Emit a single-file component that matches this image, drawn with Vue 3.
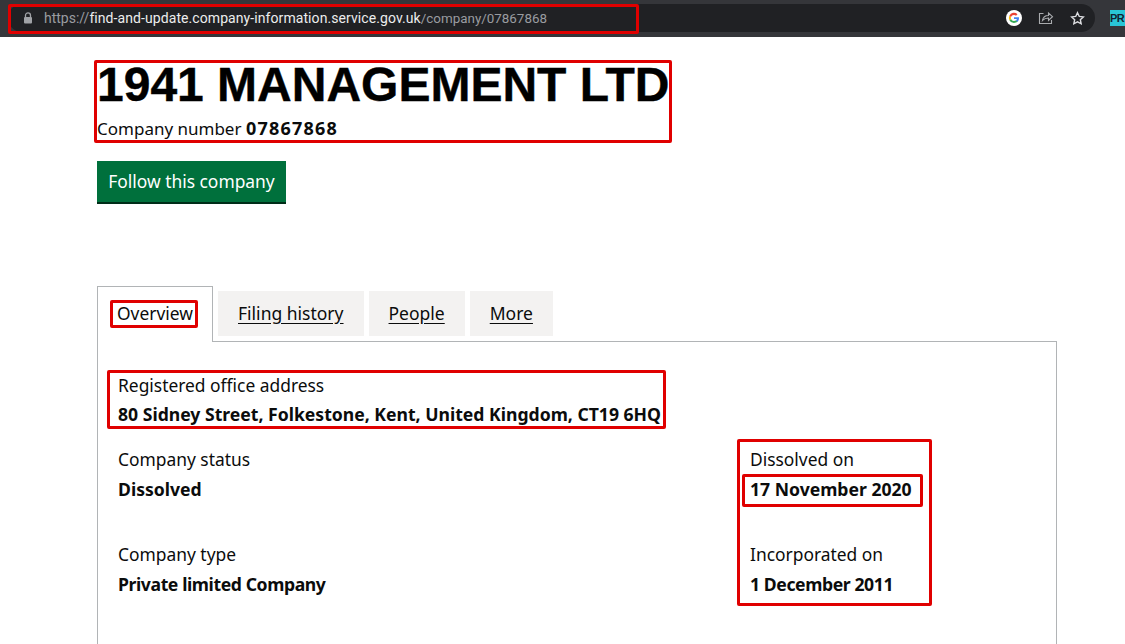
<script setup>
const tabs = ['Filing history', 'People', 'More']
const boxes = [
  { name: 'url', style: 'left:8px;top:4px;width:631px;height:30px' },
  { name: 'title', style: 'left:94px;top:60px;width:578px;height:83px' },
  { name: 'tab', style: 'left:110px;top:300px;width:88px;height:28px' },
  { name: 'addr', style: 'left:107px;top:370px;width:559px;height:59px' },
  { name: 'side', style: 'left:737px;top:439px;width:195px;height:167px' },
  { name: 'date', style: 'left:742px;top:474px;width:181px;height:33px' }
]
</script>

<template>
  <div class="page">
    <header class="chrome">
      <div class="omnibox">
        <svg class="lock" width="10" height="12" viewBox="0 0 10 12"><path d="M2.500 5V3.400a2.500 2.500 0 0 1 5 0V5" fill="none" stroke="#a0a2a6" stroke-width="1.300"/><rect x="1" y="5" width="8" height="6.500" rx="1" fill="#a0a2a6"/></svg>
        <div class="url"><span class="dim">https://</span><span class="host">find-and-update.company-information.service.gov.uk</span><span class="dim path">/company/07867868</span></div>
        <div class="actions">
          <svg width="16" height="16" viewBox="0 0 16 16"><circle cx="8" cy="8" r="8" fill="#fff"/><path d="M13 8.200c0-.4 0-.7-.1-1H8v1.900h2.800a2.400 2.400 0 0 1-1 1.600l1.600 1.200c1-.9 1.600-2.200 1.600-3.700z" fill="#4285f4"/><path d="M8 13c1.400 0 2.500-.5 3.400-1.200l-1.600-1.200c-.5.3-1.100.5-1.800.5a3.100 3.100 0 0 1-3-2.100l-1.600 1.200A5 5 0 0 0 8 13z" fill="#34a853"/><path d="M5 9a3 3 0 0 1 0-2L3.400 5.800a5 5 0 0 0 0 4.400z" fill="#fbbc05"/><path d="M8 4.900c.8 0 1.500.3 2 .8l1.500-1.500A5 5 0 0 0 3.400 5.800L5 7a3.100 3.100 0 0 1 3-2.100z" fill="#ea4335"/></svg>
          <svg width="16" height="16" viewBox="0 0 16 16" fill="none" stroke="#a9abae" stroke-width="1.100"><path d="M5.500 3.500H1.500v10h12V10"/><path d="M4.500 10.500c.5-3 3-5 6-5V3l4 3.700-4 3.700V8c-2.500 0-4.500.8-6 2.500z"/></svg>
          <svg width="15" height="15" viewBox="0 0 16 16" fill="none" stroke="#dcdde0" stroke-width="1.500"><path d="M8 1.800l1.900 4 4.300.5-3.200 3 .9 4.300L8 11.500l-3.900 2.100.9-4.300-3.200-3 4.300-.5z"/></svg>
        </div>
      </div>
      <div class="ext">PR</div>
    </header>

    <main class="content">
      <h1 class="title">1941 MANAGEMENT LTD</h1>
      <p class="number">Company number <strong>07867868</strong></p>
      <button class="follow">Follow this company</button>

      <nav class="tabs">
        <span class="tab active">Overview</span>
        <a v-for="t in tabs" :key="t" class="tab">{{ t }}</a>
      </nav>
      <section class="panel">
        <dl class="field address">
          <dt>Registered office address</dt>
          <dd>80 Sidney Street, Folkestone, Kent, United Kingdom, CT19 6HQ</dd>
        </dl>
        <div class="columns">
          <div class="col">
            <dl class="field"><dt>Company status</dt><dd>Dissolved</dd></dl>
            <dl class="field"><dt>Company type</dt><dd class="tight">Private limited Company</dd></dl>
          </div>
          <div class="col">
            <dl class="field"><dt>Dissolved on</dt><dd>17 November 2020</dd></dl>
            <dl class="field"><dt>Incorporated on</dt><dd class="tight">1 December 2011</dd></dl>
          </div>
        </div>
      </section>
    </main>

    <div v-for="b in boxes" :key="b.name" class="mark" :style="b.style"></div>
  </div>
</template>

<style>
html, body { margin: 0; background: #fff; overflow: hidden; }
</style>

<style scoped>
.page { position: relative; width: 1125px; height: 644px; overflow: hidden; font-family: "Noto Sans", sans-serif; color: #0b0c0c; }
.chrome { height: 37px; box-sizing: border-box; background: #35363a; display: flex; align-items: center; padding: 0 0 2px 8px; }
.omnibox { flex: none; width: 1087px; height: 28px; margin-top: 1px; border-radius: 14px; background: #202124; display: flex; align-items: center; padding: 0 10px 0 14px; box-sizing: border-box; }
.lock { margin-left: 1px; }
.url { margin-left: 11px; font: 14px "Roboto", sans-serif; flex: 1; white-space: nowrap; }
.dim { color: #9a9ca0; }
.path { font-size: 13.400px; }
.host { color: #eceded; letter-spacing: .08px; }
.actions { display: flex; align-items: center; gap: 16px; }
.ext { flex: none; width: 15px; margin-left: 15px; background: #29c5d6; color: #123; font: bold 11px/16px "Liberation Sans", sans-serif; letter-spacing: -.5px; height: 16px; white-space: nowrap; }
.content { padding: 0 0 0 97px; }
.title { margin: 20px 0 0; font: bold 48px/56px "Liberation Sans", sans-serif; color: #000; -webkit-text-stroke: .4px #000; }
.number { margin: 3px 0 0; font-size: 17px; line-height: 24px; }
.number strong { font-weight: 700; font-size: 18px; letter-spacing: 1.200px; }
.follow { display: block; margin-top: 20px; width: 189px; height: 43px; padding: 0 0 2px; background: #00703c; color: #fff; border: 0; border-bottom: 2px solid #002d18; font: 17.400px "Noto Sans", sans-serif; }
.tabs { margin-top: 82px; display: flex; gap: 5px; align-items: flex-start; position: relative; z-index: 1; }
.tab { height: 45px; box-sizing: border-box; padding: 0 20px; margin-top: 5px; background: #f3f2f1; font-size: 17.500px; line-height: 45px; text-decoration: underline; text-underline-offset: 3px; }
.tab.active { height: 56px; width: 116px; margin-top: 0; padding: 4px 19px 0; font-size: 17.400px; background: #fff; border: 1px solid #b1b4b6; border-bottom: 0; text-decoration: none; }
.panel { width: 960px; height: 320px; box-sizing: border-box; padding: 31px 20px 0; border: 1px solid #b1b4b6; margin-top: -1px; }
.field { margin: 0; }
.field dt { font-size: 17.400px; line-height: 24px; }
.field dd { margin: 6px 0 0; font-size: 17.600px; font-weight: 700; line-height: 24px; }
.field dd.tight { letter-spacing: -.4px; }
.address dd { margin-top: 5px; }
.columns { display: flex; margin-top: 21px; }
.col { flex: 0 0 632px; display: flex; flex-direction: column; gap: 41px; }
.mark { position: absolute; z-index: 2; box-sizing: border-box; border: 3px solid #e00000; border-radius: 2px; pointer-events: none; }
</style>
